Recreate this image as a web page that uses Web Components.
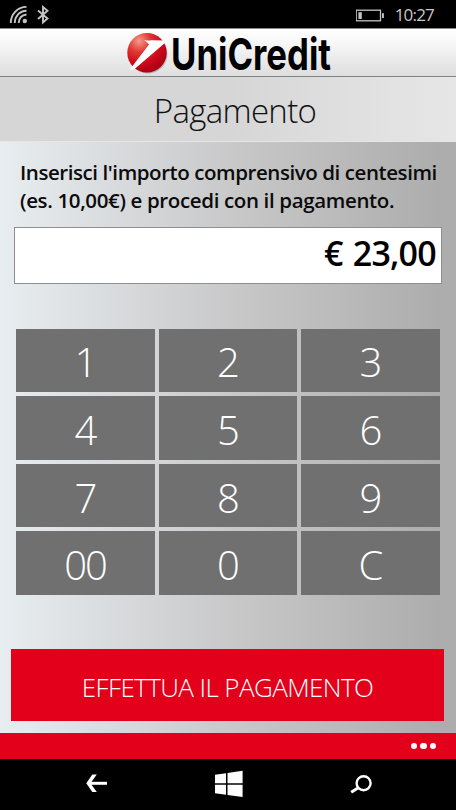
<!DOCTYPE html>
<html lang="it">
<head>
<meta charset="utf-8">
<title>Pagamento</title>
<style>
  body {
    margin: 0;
    width: 456px;
    height: 810px;
    overflow: hidden;
    background: #000;
    font-family: "Open Sans", "Noto Sans", sans-serif;
  }
</style>
</head>
<body>
<payment-app></payment-app>

<script>
function define(name, html) {
  const template = document.createElement('template');
  template.innerHTML = html;
  customElements.define(name, class extends HTMLElement {
    constructor() {
      super();
      this.attachShadow({ mode: 'open' });
      this.shadowRoot.appendChild(template.content.cloneNode(true));
    }
  });
}

define('status-bar', `
  <style>
    :host {
      display: flex;
      align-items: center;
      justify-content: space-between;
      height: 28px;
      background: #000;
      color: #c8c8c8;
      box-sizing: border-box;
      padding: 0 22px 0 9px;
      font-size: 17px;
      font-weight: 400;
    }
    div { display: flex; align-items: center; }
    svg { display: block; }
    .time { margin-left: 9px; letter-spacing: -0.8px; line-height: 28px; padding-top: 2px; }
  </style>
  <div>
    <svg width="44" height="28" fill="none" stroke="#c4c4c4">
      <g stroke-width="1.9">
        <path d="M1.7 23C2 14 8.500 7 17.500 6.900"/>
        <path d="M5.700 23C6 16 10.500 11 17.500 10.700"/>
        <path d="M9.700 23C10 18 13 15 17.500 14.500"/>
      </g>
      <circle cx="15.800" cy="21" r="2.200" fill="#c4c4c4" stroke="none"/>
      <path d="M29 10.500L38.500 18.500L34 22.500V7L38.500 10.800L29 19" stroke-width="1.900"/>
    </svg>
  </div>
  <div>
    <svg width="30" height="28" fill="#c4c4c4">
      <rect x="0.200" y="10.200" width="24.300" height="10.600" fill="none" stroke="#c4c4c4" stroke-width="1.300"/>
      <rect x="2.400" y="12.200" width="3.400" height="6.800"/>
      <rect x="26" y="13.200" width="1.900" height="4.800"/>
    </svg>
    <span class="time"><slot></slot></span>
  </div>
`);

define('brand-header', `
  <style>
    :host {
      display: block;
      height: 49px;
      box-sizing: border-box;
      border-top: 1px solid #8a8a8a;
      border-bottom: 1px solid #7e8481;
      background: linear-gradient(#fff, #f7f7f7 30%, #dedede);
    }
    svg { display: block; overflow: visible; }
    text { font-family: Inter, "Open Sans", sans-serif; }
  </style>
  <svg width="456" height="47" viewBox="0 29 456 47">
    <defs>
      <radialGradient id="ball" cx="0.3" cy="0.2" r="0.8">
        <stop offset="0" stop-color="#f79a8c"/>
        <stop offset="0.35" stop-color="#e03a35"/>
        <stop offset="0.7" stop-color="#cf0a1c"/>
        <stop offset="1" stop-color="#b00014"/>
      </radialGradient>
    </defs>
    <ellipse cx="148" cy="54" rx="19.500" ry="19.500" fill="#777" opacity="0.450"/>
    <circle cx="147" cy="52.700" r="19.700" fill="url(#ball)"/>
    <path d="M144 40Q148 41 151 40.300L165.700 40.500L166 42L134 69.500L130 69.200L149 44.500Q147 42 144 40Z" fill="#fff"/>
    <text x="171" y="69.600" font-size="44.500" font-weight="700" textLength="160" lengthAdjust="spacingAndGlyphs">UniCredit</text>
  </svg>
`);

define('page-title', `
  <style>
    :host {
      display: flex;
      justify-content: center;
      height: 65px;
      box-sizing: border-box;
      padding: 0 0 0 14px;
      line-height: 67px;
      border-bottom: 1px solid #e6e6e6;
      background: linear-gradient(90deg, #d6d6d6 50%, #e2e2e2 85%, #e6e6e6);
      font-size: 33px;
      font-weight: 300;
      letter-spacing: -0.7px;
      color: #111;
    }
  </style>
  <slot></slot>
`);

define('amount-field', `
  <style>
    :host {
      display: flex;
      justify-content: flex-end;
      height: 57px;
      box-sizing: border-box;
      border: 1px solid #8d8f90;
      background: #fff;
      padding-right: 5px;
      line-height: 51px;
      font-size: 34px;
      font-weight: 600;
      letter-spacing: -0.75px;
      word-spacing: 2px;
      color: #000;
      white-space: pre;
    }
  </style>
  <slot></slot>
`);

define('key-button', `
  <style>
    :host {
      display: flex;
      align-items: center;
      justify-content: center;
      background: #707070;
      color: #fff;
      font-size: 40px;
      font-weight: 300;
      line-height: 1;
      letter-spacing: -2px;
    }
    span { padding: 4px 1px 0 0; }
  </style>
  <span><slot></slot></span>
`);

define('key-pad', `
  <style>
    :host {
      display: grid;
      grid-template-columns: repeat(3, 1fr);
      grid-template-rows: repeat(4, 1fr);
      gap: 3.600px;
      height: 266.500px;
    }
  </style>
  <slot></slot>
`);

define('pay-button', `
  <style>
    :host {
      display: flex;
      align-items: center;
      justify-content: center;
      height: 72px;
      background: #e2001a;
      color: #fff;
      font-size: 26px;
      font-weight: 300;
      letter-spacing: -0.6px;
      white-space: nowrap;
    }
    span { padding-top: 3px; }
  </style>
  <span><slot></slot></span>
`);

define('app-bar', `
  <style>
    :host {
      display: flex;
      align-items: center;
      justify-content: flex-end;
      gap: 3px;
      height: 26px;
      box-sizing: border-box;
      padding: 0 20px 0 0;
      background: #e2001a;
    }
    i { width: 6.300px; height: 6.300px; border-radius: 50%; background: #fff; }
  </style>
  <i></i><i></i><i></i>
`);

define('nav-bar', `
  <style>
    :host { display: block; height: 51px; background: #000; }
    svg { display: block; }
  </style>
  <svg width="456" height="51" viewBox="0 759 456 51" fill="none" stroke="#fff">
    <path d="M107 783.300H88.500" stroke-width="3"/>
    <path d="M92.300 774.500H96.800L90.500 783.300L96.800 792H92.300L86.300 783.300Z" fill="#fff" stroke="none"/>
    <path d="M215 774.700L226 773.200V783.200H215ZM227.500 773L242.600 770.800V783.200H227.500ZM215 784.700H226V794.700L215 793.200ZM227.500 784.700H242.600V797L227.500 794.900Z" fill="#fff" stroke="none"/>
    <circle cx="363.600" cy="783.200" r="7" stroke-width="2.400"/>
    <path d="M358.300 787.800L351.200 792.300" stroke-width="3"/>
  </svg>
`);

define('payment-app', `
  <style>
    :host { display: flex; flex-direction: column; width: 456px; height: 810px; }
    main {
      flex: 1;
      display: flex;
      flex-direction: column;
      box-sizing: border-box;
      padding: 16px 0 0;
      background: linear-gradient(90deg, #e7edf0, #e2e6e9 10%, #c9c9ca 50%, #adadad 96%, #adadad);
    }
    p {
      margin: 0 0 0 20px;
      font-size: 20.500px;
      font-weight: 600;
      line-height: 28px;
      white-space: nowrap;
      color: #0b0b0b;
    }
    .first { letter-spacing: -0.43px; }
    .second { letter-spacing: -0.36px; }
    amount-field { margin: 13px 14px 0; }
    key-pad { margin: 44.500px 16px 0; }
    pay-button { margin: 54px 12px 0 11px; }
  </style>
  <status-bar>10:27</status-bar>
  <brand-header></brand-header>
  <page-title>Pagamento</page-title>
  <main>
    <p class="first">Inserisci l'importo comprensivo di centesimi</p>
    <p class="second">(es. 10,00€) e procedi con il pagamento.</p>
    <amount-field>€ 23,00</amount-field>
    <key-pad>
      <key-button>1</key-button>
      <key-button>2</key-button>
      <key-button>3</key-button>
      <key-button>4</key-button>
      <key-button>5</key-button>
      <key-button>6</key-button>
      <key-button>7</key-button>
      <key-button>8</key-button>
      <key-button>9</key-button>
      <key-button>00</key-button>
      <key-button>0</key-button>
      <key-button>C</key-button>
    </key-pad>
    <pay-button>EFFETTUA IL PAGAMENTO</pay-button>
  </main>
  <app-bar></app-bar>
  <nav-bar></nav-bar>
`);
</script>
</body>
</html>
